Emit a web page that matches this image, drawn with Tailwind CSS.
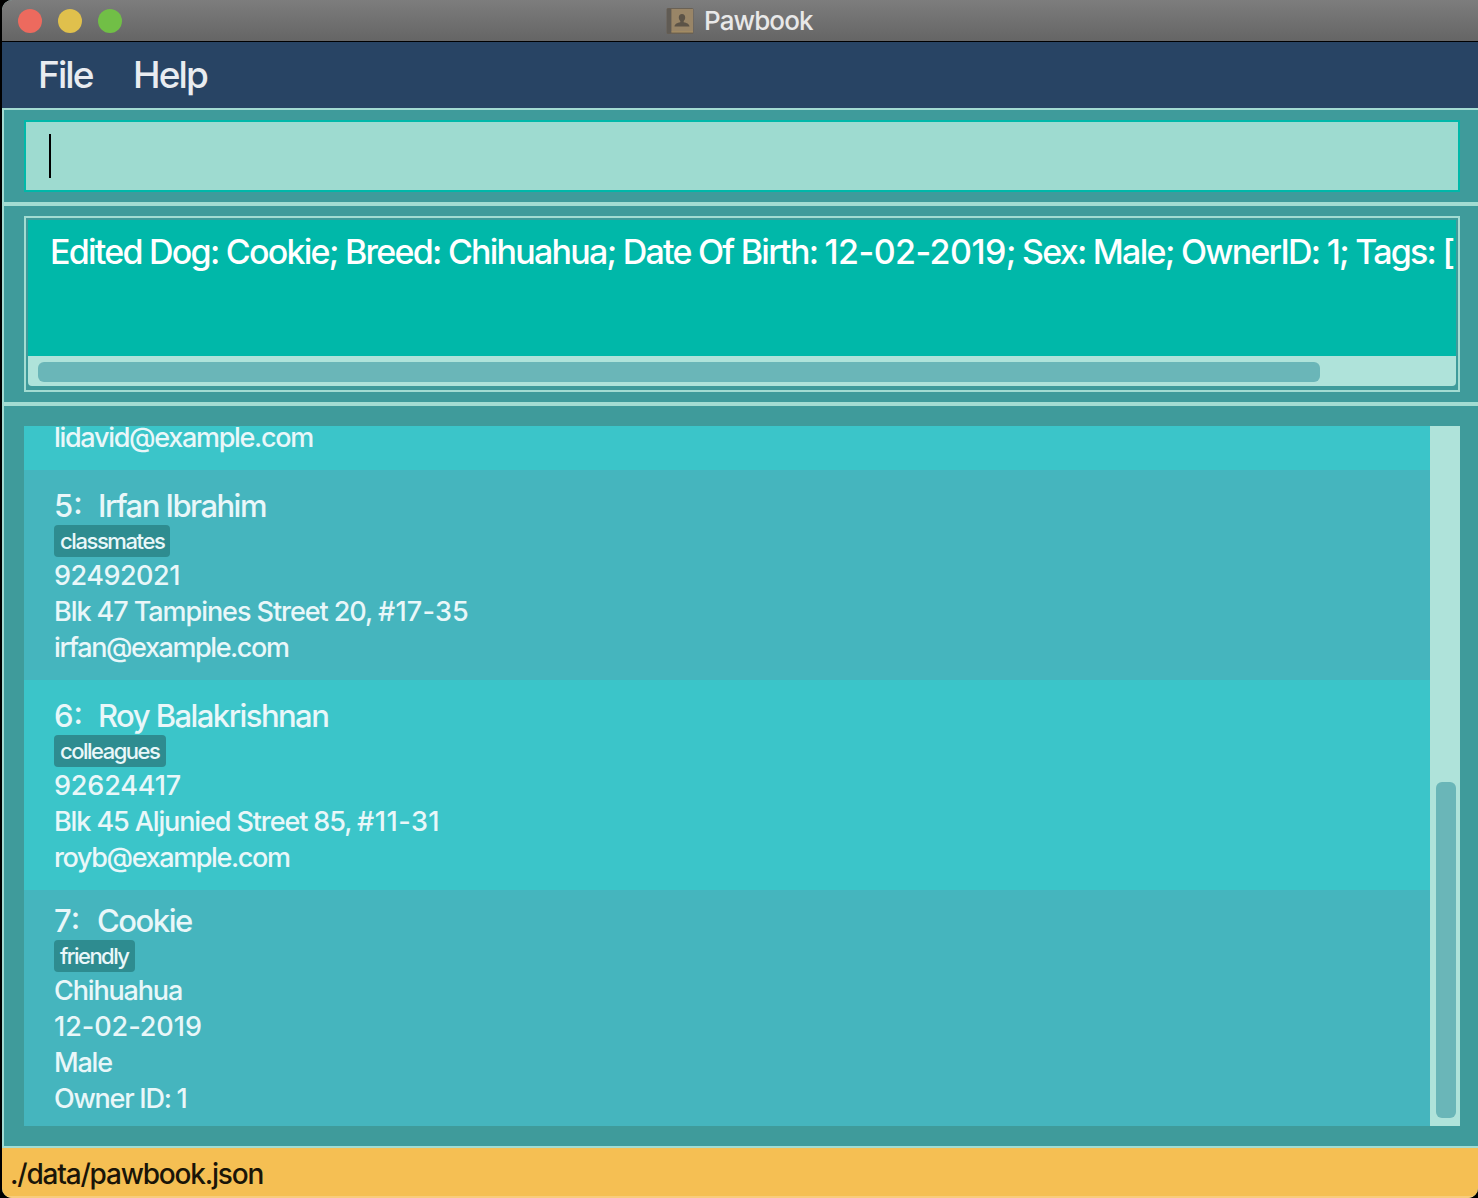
<!DOCTYPE html>
<html lang="en">
<head>
<meta charset="utf-8">
<title>Pawbook</title>
<script src="https://cdn.jsdelivr.net/npm/@tailwindcss/browser@4"></script>
</head>
<body class="h-[1198px] w-[1478px] overflow-hidden bg-black pl-[2px] font-['Inter',sans-serif] font-medium">
<div class="flex h-full w-full flex-col overflow-hidden rounded-tl-[10px] rounded-b-[10px] bg-[#a3dcd2]">
  <!-- Title bar -->
  <header class="flex h-[42px] shrink-0 items-center border-b border-black bg-linear-to-b from-[#7d7d7d] to-[#656565] pl-4">
    <div class="flex gap-4">
      <span class="size-6 rounded-full bg-[#ed6a5e]"></span>
      <span class="size-6 rounded-full bg-[#e0c04c]"></span>
      <span class="size-6 rounded-full bg-[#71bf46]"></span>
    </div>
    <div class="ml-[544px] flex items-center gap-[10px]">
      <svg class="size-7" viewBox="0 0 28 28">
        <rect x="0.5" y="1" width="27" height="26" rx="1.5" fill="#6a6154"/>
        <rect x="1" y="1.5" width="4" height="25" rx="1" fill="#605b54"/>
        <rect x="5.5" y="2" width="21.5" height="23" fill="#998567"/>
        <path d="M5.500 25H27" stroke="#aa9060"/>
        <path d="M16 7c-2 0-3.200 1.400-3.200 3.500 0 1.500.6 2.700 1.500 3.500v1.200c-3 .7-5.500 1.500-5.800 4.300h15c-.3-2.800-2.800-3.600-5.800-4.300V14c.9-.8 1.500-2 1.500-3.500C19.200 8.400 18 7 16 7z" fill="#5c5347"/>
      </svg>
      <h1 class="text-[26px] leading-8 tracking-[-0.9px] text-[#e8e8e8]">Pawbook</h1>
    </div>
  </header>
  <nav class="flex h-[66px] shrink-0 items-center bg-[#284464] pl-[36px] text-[37px] text-[#e9ecf0]">
    <span class="w-[95px] tracking-[-1.9px]">File</span>
    <span class="tracking-[-1.9px]">Help</span>
  </nav>

  <main class="flex min-h-0 grow flex-col gap-1 pt-[2px] pb-[2px] pl-[2px]">
    <!-- Command box -->
    <section class="h-[92px] shrink-0 bg-[#3f9b9b] pt-[10px] pr-[18px] pb-[10px] pl-5">
      <div class="flex h-[72px] items-center border-2 border-[#00b8a9] bg-[#9edbd0] pl-[23px]">
        <span class="h-11 w-[2px] bg-black"></span>
      </div>
    </section>
    <!-- Result display -->
    <section class="h-[196px] shrink-0 bg-[#3f9b9b] pt-[10px] pr-[18px] pb-[10px] pl-5">
      <div class="flex h-[176px] flex-col border-2 border-[#a3dcd2] px-[2px] pt-[2px] pb-1">
        <div class="h-[136px] shrink-0 overflow-hidden bg-[#00b8a9] pt-[10px] pl-[22px] text-[34px] leading-[44px] tracking-[-1.76px] whitespace-nowrap text-white">Edited Dog: Cookie; Breed: Chihuahua; Date Of Birth: <span class="tracking-[-0.55px]">12-02-2019</span>; Sex: Male; OwnerID: 1; Tags: [</div>
        <div class="h-[30px] rounded-b bg-[#afe3da] pt-[6px] pl-[10px]">
          <div class="h-5 w-[1282px] rounded-md bg-[#6ab6b8]"></div>
        </div>
      </div>
    </section>
    <!-- Entry list -->
    <section class="flex grow bg-[#3f9b9b] py-5 pr-[18px] pl-5">
      <div class="flex h-[700px] w-[1406px] flex-col justify-end overflow-hidden text-[27px] leading-9 text-[#e9f7f9]">
        <article class="flex h-[44px] flex-col justify-end overflow-hidden bg-[#3bc5c9] pb-[14px] pl-[30px]">
          <p class="tracking-[-1.31px]">lidavid@example.com</p>
        </article>
        <article class="h-[210px] bg-[#45b5be] pt-[17px] pl-[30px]">
          <h2 class="flex h-[38px] text-[31px] leading-[38px]"><span class="w-[44px]">5:</span><span class="tracking-[-1.53px]">Irfan Ibrahim</span></h2>
          <div class="mb-px flex h-8 w-[116px] items-center rounded bg-[#2e8c90] pl-[6px] text-[22px] tracking-[-1.42px]">classmates</div>
          <p class="tracking-[-0.5px]">92492021</p>
          <p class="tracking-[-1.06px]">Blk 47 Tampines Street 20, <span class="tracking-[0.2px]">#17-35</span></p>
          <p class="tracking-[-1.42px]">irfan@example.com</p>
        </article>
        <article class="h-[210px] bg-[#3bc5c9] pt-[17px] pl-[30px]">
          <h2 class="flex h-[38px] text-[31px] leading-[38px]"><span class="w-[44px]">6:</span><span class="tracking-[-1.55px]">Roy Balakrishnan</span></h2>
          <div class="mb-px flex h-8 w-[112px] items-center rounded bg-[#2e8c90] pl-[6px] text-[22px] tracking-[-1.5px]">colleagues</div>
          <p class="tracking-[-0.15px]">92624417</p>
          <p class="tracking-[-1.11px]">Blk 45 Aljunied Street 85, <span class="tracking-[0.5px]">#11-31</span></p>
          <p class="tracking-[-1.38px]">royb@example.com</p>
        </article>
        <article class="h-[236px] bg-[#45b5be] pt-[12px] pl-[30px]">
          <h2 class="flex h-[38px] text-[31px] leading-[38px]"><span class="w-[43px]">7:</span><span class="tracking-[-1.45px]">Cookie</span></h2>
          <div class="mb-px flex h-8 w-[81px] items-center rounded bg-[#2e8c90] pl-[6px] text-[22px] tracking-[-1.55px]">friendly</div>
          <p class="tracking-[-1.15px]">Chihuahua</p>
          <p class="tracking-[-0.05px]">12-02-2019</p>
          <p class="tracking-[-1.2px]">Male</p>
          <p class="tracking-[-1.25px]">Owner ID: 1</p>
        </article>
      </div>
      <div class="flex w-[30px] flex-col justify-end bg-[#afe3da] pr-1 pb-2 pl-[6px]">
        <div class="h-[336px] rounded-md bg-[#6ab6b8]"></div>
      </div>
    </section>
  </main>
  <footer class="flex h-[50px] shrink-0 items-center border-b-2 border-[#f8cc7c] bg-[#f5bf53] pt-[3px] pl-[8px] text-[28px] tracking-[-1.2px] text-[#1a1508]">./data/pawbook.json</footer>
</div>
</body>
</html>
